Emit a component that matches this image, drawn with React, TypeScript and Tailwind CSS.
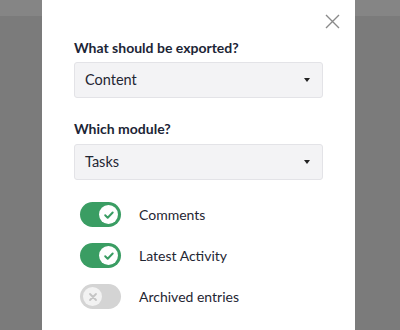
import React, { useState } from 'react';

function Toggle({ on, onClick }: { on: boolean; onClick: () => void }) {
  return (
    <button
      onClick={onClick}
      className={`relative w-[41px] h-[25px] rounded-full shrink-0 ${on ? 'bg-[#3a9d63]' : 'bg-[#d4d4d4]'}`}
    >
      <span
        className={`absolute top-[3px] w-[19px] h-[19px] rounded-full flex items-center justify-center ${on ? 'left-[19px] bg-white' : 'left-[3px] bg-[#f2f2f2]'}`}
      >
        {on ? (
          <svg width="12" height="12" viewBox="0 0 12 12" fill="none">
            <path d="M2.2 6.2l2.5 2.5 5-5.2" stroke="#3a9d63" strokeWidth="2" strokeLinecap="round" strokeLinejoin="round" />
          </svg>
        ) : (
          <svg width="10" height="10" viewBox="0 0 10 10" fill="none">
            <path d="M2 2l6 6M8 2l-6 6" stroke="#c4c4c4" strokeWidth="1.8" strokeLinecap="round" />
          </svg>
        )}
      </span>
    </button>
  );
}

function Select({ value }: { value: string }) {
  return (
    <div className="h-[36px] bg-[#f3f3f5] border border-[#e3e3e7] rounded-[3px] flex items-center justify-between pl-[10px] pr-[12px] text-[14.5px] text-[#1f2633]">
      <span>{value}</span>
      <svg width="6" height="4" viewBox="0 0 6 4">
        <path d="M0 0h6L3 4z" fill="#222" />
      </svg>
    </div>
  );
}

export default function App() {
  const [opts, setOpts] = useState([
    { label: 'Comments', on: true },
    { label: 'Latest Activity', on: true },
    { label: 'Archived entries', on: false },
  ]);

  return (
    <div className="w-[400px] h-[330px] bg-[#7b7b7b] overflow-hidden relative" style={{ fontFamily: '"Lato", "Noto Sans", sans-serif' }}>
      <div className="absolute top-0 left-0 right-0 h-[16px] bg-[#858585]" />
      <div className="absolute top-0 bottom-0 left-[42px] w-[313px] bg-white pl-[32px] pr-[32px]">
        <div className="flex justify-end pt-[14px] -mr-[17px]">
          <svg width="15" height="15" viewBox="0 0 15 15" fill="none">
            <path d="M1 1l13 13M14 1L1 14" stroke="#8a8a8a" strokeWidth="1.4" />
          </svg>
        </div>
        <div className="mt-[8px] text-[14px] font-bold text-[#1c2536]">What should be exported?</div>
        <div className="mt-[4px]">
          <Select value="Content" />
        </div>
        <div className="mt-[20px] text-[14px] font-bold text-[#1c2536]">Which module?</div>
        <div className="mt-[5px]">
          <Select value="Tasks" />
        </div>
        <div className="mt-[22px] pl-[6px] flex flex-col gap-[16px]">
          {opts.map((o, i) => (
            <div key={o.label} className="flex items-center gap-[18px]">
              <Toggle
                on={o.on}
                onClick={() => setOpts(opts.map((x, j) => (j === i ? { ...x, on: !x.on } : x)))}
              />
              <span className="text-[14px] text-[#1f2633]">{o.label}</span>
            </div>
          ))}
        </div>
      </div>
    </div>
  );
}
